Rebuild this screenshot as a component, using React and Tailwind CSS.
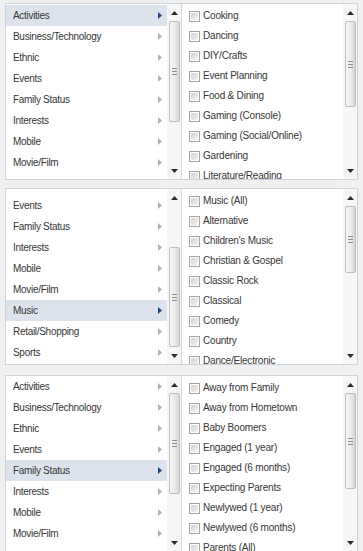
import React from "react";

const font = { fontFamily: '"Liberation Sans", Arial, sans-serif' };

function UpArrow() {
  return (
    <svg width="7" height="4" viewBox="0 0 7 4">
      <polygon points="0,4 7,4 3.5,0" fill="#2b2b2b" />
    </svg>
  );
}
function DownArrow() {
  return (
    <svg width="7" height="4" viewBox="0 0 7 4">
      <polygon points="0,0 7,0 3.5,4" fill="#2b2b2b" />
    </svg>
  );
}

function Scrollbar({ spacer, thumb }) {
  return (
    <div className="flex w-[14px] shrink-0 flex-col bg-[#f6f6f6]">
      <div className="flex h-[17px] shrink-0 items-center justify-center">
        <UpArrow />
      </div>
      <div className="flex flex-1 flex-col items-center overflow-hidden">
        <div className={spacer} />
        <div
          className={
            "flex w-[11px] shrink-0 flex-col items-center justify-center gap-[2px] rounded-[2px] border border-[#bcbcbc] bg-gradient-to-r from-[#f7f7f7] via-[#ebebeb] to-[#d6d6d6] " +
            thumb
          }
        >
          <div className="h-px w-[5px] bg-[#8c8c8c]" />
          <div className="h-px w-[5px] bg-[#8c8c8c]" />
          <div className="h-px w-[5px] bg-[#8c8c8c]" />
        </div>
      </div>
      <div className="flex h-[17px] shrink-0 items-center justify-center">
        <DownArrow />
      </div>
    </div>
  );
}

function SubArrow({ active }) {
  return (
    <svg width="4" height="7" viewBox="0 0 4 7">
      <polygon points="0,0 4,3.5 0,7" fill={active ? "#23457f" : "#b0b0b0"} />
    </svg>
  );
}

function LeftList({ items, selected, pad, spacer, thumb }) {
  return (
    <div className="flex w-[175px] shrink-0">
      <div className={"flex flex-1 flex-col overflow-hidden " + pad}>
        {items.map((it) => (
          <div
            key={it}
            className={
              "flex h-[21px] shrink-0 items-center justify-between pl-[7px] pr-[5px] " +
              (it === selected ? "bg-[#dde3ed]" : "")
            }
          >
            <span className="text-[10px] leading-none tracking-[-0.3px] text-[#363636]">{it}</span>
            <SubArrow active={it === selected} />
          </div>
        ))}
      </div>
      <Scrollbar spacer={spacer} thumb={thumb} />
    </div>
  );
}

function Checkbox() {
  return (
    <div className="h-[11px] w-[11px] shrink-0 border border-[#a3a3a3] bg-white p-px">
      <div className="h-full w-full bg-gradient-to-br from-[#d2d2d2] to-[#f2f2f2]" />
    </div>
  );
}

function RightList({ items, thumb }) {
  return (
    <div className="flex flex-1 border-l border-[#d3d9e0]">
      <div className="flex flex-1 flex-col overflow-hidden pt-[2px]">
        {items.map((it) => (
          <div key={it} className="flex h-[20px] shrink-0 items-center gap-[3px] pl-[7px]">
            <Checkbox />
            <span className="text-[10px] leading-none tracking-[-0.2px] text-[#363636]">{it}</span>
          </div>
        ))}
      </div>
      <Scrollbar spacer="h-0" thumb={thumb} />
    </div>
  );
}

function Panel({ className, left, right }) {
  return (
    <div className={"ml-[5px] flex h-[177px] w-[353px] shrink-0 overflow-hidden border border-[#cdd3db] bg-white " + className}>
      <LeftList {...left} />
      <RightList {...right} />
    </div>
  );
}

const cats = [
  "Activities",
  "Business/Technology",
  "Ethnic",
  "Events",
  "Family Status",
  "Interests",
  "Mobile",
  "Movie/Film",
];

export default function App() {
  return (
    <div className="flex h-[551px] w-[363px] flex-col overflow-hidden bg-[#f0f0f0]" style={font}>
      <Panel
        className="mt-[3px]"
        left={{ items: cats, selected: "Activities", pad: "pt-[1px]", spacer: "h-0", thumb: "h-[101px]" }}
        right={{
          items: [
            "Cooking",
            "Dancing",
            "DIY/Crafts",
            "Event Planning",
            "Food & Dining",
            "Gaming (Console)",
            "Gaming (Social/Online)",
            "Gardening",
            "Literature/Reading",
          ],
          thumb: "h-[86px]",
        }}
      />
      <Panel
        className="mt-[8px]"
        left={{
          items: ["Events", "Family Status", "Interests", "Mobile", "Movie/Film", "Music", "Retail/Shopping", "Sports"],
          selected: "Music",
          pad: "pt-[6px]",
          spacer: "h-[41px] shrink-0",
          thumb: "h-[100px]",
        }}
        right={{
          items: [
            "Music (All)",
            "Alternative",
            "Children's Music",
            "Christian & Gospel",
            "Classic Rock",
            "Classical",
            "Comedy",
            "Country",
            "Dance/Electronic",
          ],
          thumb: "h-[67px]",
        }}
      />
      <Panel
        className="mt-[10px]"
        left={{ items: cats, selected: "Family Status", pad: "pt-0", spacer: "h-0", thumb: "h-[101px]" }}
        right={{
          items: [
            "Away from Family",
            "Away from Hometown",
            "Baby Boomers",
            "Engaged (1 year)",
            "Engaged (6 months)",
            "Expecting Parents",
            "Newlywed (1 year)",
            "Newlywed (6 months)",
            "Parents (All)",
          ],
          thumb: "h-[96px]",
        }}
      />
    </div>
  );
}
